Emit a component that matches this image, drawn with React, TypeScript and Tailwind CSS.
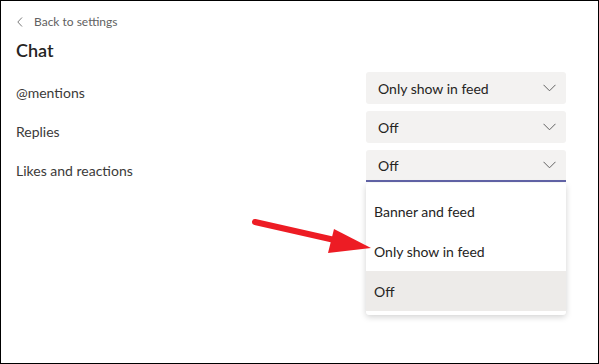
import React from 'react';

const font = { fontFamily: '"Lato", "Open Sans", sans-serif' };

function Chevron() {
  return (
    <svg width="13" height="8" viewBox="0 0 13 8" className="text-[#616161]">
      <path d="M0.5 0.8 L6.5 6.8 L12.5 0.8" fill="none" stroke="currentColor" strokeWidth="1" />
    </svg>
  );
}

function Select({ value, focused }: { value: string; focused?: boolean }) {
  return (
    <div
      className={`w-[200px] h-[32px] bg-[#f3f2f1] rounded-[3px] flex items-center justify-between pl-3 pr-[10px] text-[14px] text-[#252423] ${
        focused ? 'border-b-2 border-[#6264a7] rounded-b-none' : ''
      }`}
    >
      <span>{value}</span>
      <Chevron />
    </div>
  );
}

const rows = [
  { label: '@mentions', value: 'Only show in feed' },
  { label: 'Replies', value: 'Off' },
  { label: 'Likes and reactions', value: 'Off', focused: true },
];

export default function App() {
  return (
    <div className="relative w-[599px] h-[364px] border border-black bg-white overflow-hidden" style={font}>
      <div className="pl-[15px] pr-[32px] pt-[13px]">
        <div className="flex items-center gap-[11px] text-[12px] text-[#616161] h-[16px]">
          <svg width="6" height="10" viewBox="0 0 6 10" className="ml-[1px]">
            <path d="M5 0.5 L0.8 5 L5 9.5" fill="none" stroke="#7a7a7a" strokeWidth="1" />
          </svg>
          <span>Back to settings</span>
        </div>
        <h1 className="mt-[8px] text-[18px] font-semibold text-[#252423] leading-[24px]">Chat</h1>
        <div className="mt-[10px] flex flex-col gap-[7px]">
          {rows.map((r) => (
            <div key={r.label} className="flex items-center justify-between">
              <span className="text-[14px] text-[#3b3a39] mt-[9px]">{r.label}</span>
              <Select value={r.value} focused={r.focused} />
            </div>
          ))}
        </div>
      </div>

      <div className="absolute left-[365px] top-[182px] w-[200px] bg-white rounded-[3px] shadow-[0_2px_6px_rgba(0,0,0,0.18)] pt-2 pb-1 text-[14px] text-[#252423]">
        <div className="h-[40px] flex items-center pl-2">Banner and feed</div>
        <div className="h-[40px] flex items-center pl-2">Only show in feed</div>
        <div className="h-[40px] flex items-center pl-2 bg-[#edebe9]">Off</div>
      </div>

      <svg className="absolute left-0 top-0" width="599" height="364" viewBox="0 0 599 364">
        <line x1="254" y1="221" x2="338" y2="240" stroke="#ed1c24" strokeWidth="6" strokeLinecap="round" />
        <polygon points="333,228 370,247 327,252" fill="#ed1c24" />
      </svg>
    </div>
  );
}
